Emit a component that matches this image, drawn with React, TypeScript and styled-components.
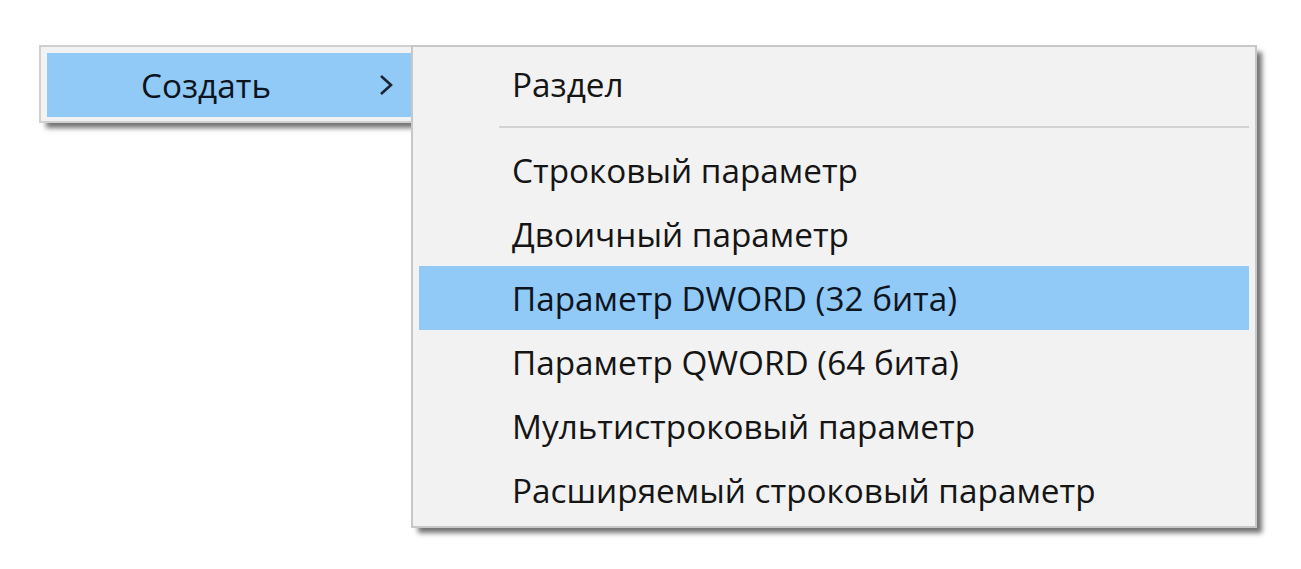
import React from "react";
import styled, { createGlobalStyle } from "styled-components";

const Global = createGlobalStyle`
  html, body { margin: 0; padding: 0; background: #ffffff; }
  body { font-family: "Open Sans", "Noto Sans", "Liberation Sans", sans-serif; }
`;

const Stage = styled.div`
  display: flex;
  align-items: flex-start;
  padding: 45px 0 0 39px;
  width: 1301px;
  height: 569px;
  box-sizing: border-box;
`;

const ParentMenu = styled.div`
  width: 372px;
  box-sizing: border-box;
  background: #f2f2f2;
  border: 2px solid #d0d0d0;
  border-right: none;
  padding: 6px 0 4px 6px;
  box-shadow: 6px 6px 5px -1px rgba(0, 0, 0, 0.55);
  position: relative;
  z-index: 1;
`;

const SubMenu = styled.div`
  width: 846px;
  box-sizing: border-box;
  background: #f2f2f2;
  border: 2px solid #c8c8c8;
  padding: 5px 6px 4px 6px;
  box-shadow: 6px 6px 5px -1px rgba(0, 0, 0, 0.55);
  position: relative;
  z-index: 2;
`;

const Row = styled.div<{ $active?: boolean }>`
  display: flex;
  align-items: center;
  height: 64px;
  background: ${(p) => (p.$active ? "#91c9f7" : "transparent")};
  color: ${(p) => (p.$active ? "#0c1420" : "#151515")};
  font-size: 33.3px;
  white-space: nowrap;
`;

const ParentRow = styled(Row)`
  padding-left: 94px;
  padding-right: 18px;
  justify-content: space-between;
`;

const SubRow = styled(Row)`
  padding-left: 93px;
`;

const Separator = styled.div`
  height: 22px;
  display: flex;
  align-items: center;
  padding-left: 80px;
  &::after {
    content: "";
    flex: 1;
    height: 2px;
    background: #d2d2d2;
  }
`;

const Chevron = () => (
  <svg width="14" height="22" viewBox="0 0 14 22">
    <polyline points="2,2 12,11 2,20" fill="none" stroke="#1a2433" strokeWidth="2.6" />
  </svg>
);

const items = [
  "Строковый параметр",
  "Двоичный параметр",
  "Параметр DWORD (32 бита)",
  "Параметр QWORD (64 бита)",
  "Мультистроковый параметр",
  "Расширяемый строковый параметр",
];

export default function App() {
  return (
    <>
      <Global />
      <Stage>
        <ParentMenu>
          <ParentRow $active>
            <span>Создать</span>
            <Chevron />
          </ParentRow>
        </ParentMenu>
        <SubMenu>
          <SubRow>Раздел</SubRow>
          <Separator />
          {items.map((t, i) => (
            <SubRow key={t} $active={i === 2}>
              {t}
            </SubRow>
          ))}
        </SubMenu>
      </Stage>
    </>
  );
}
